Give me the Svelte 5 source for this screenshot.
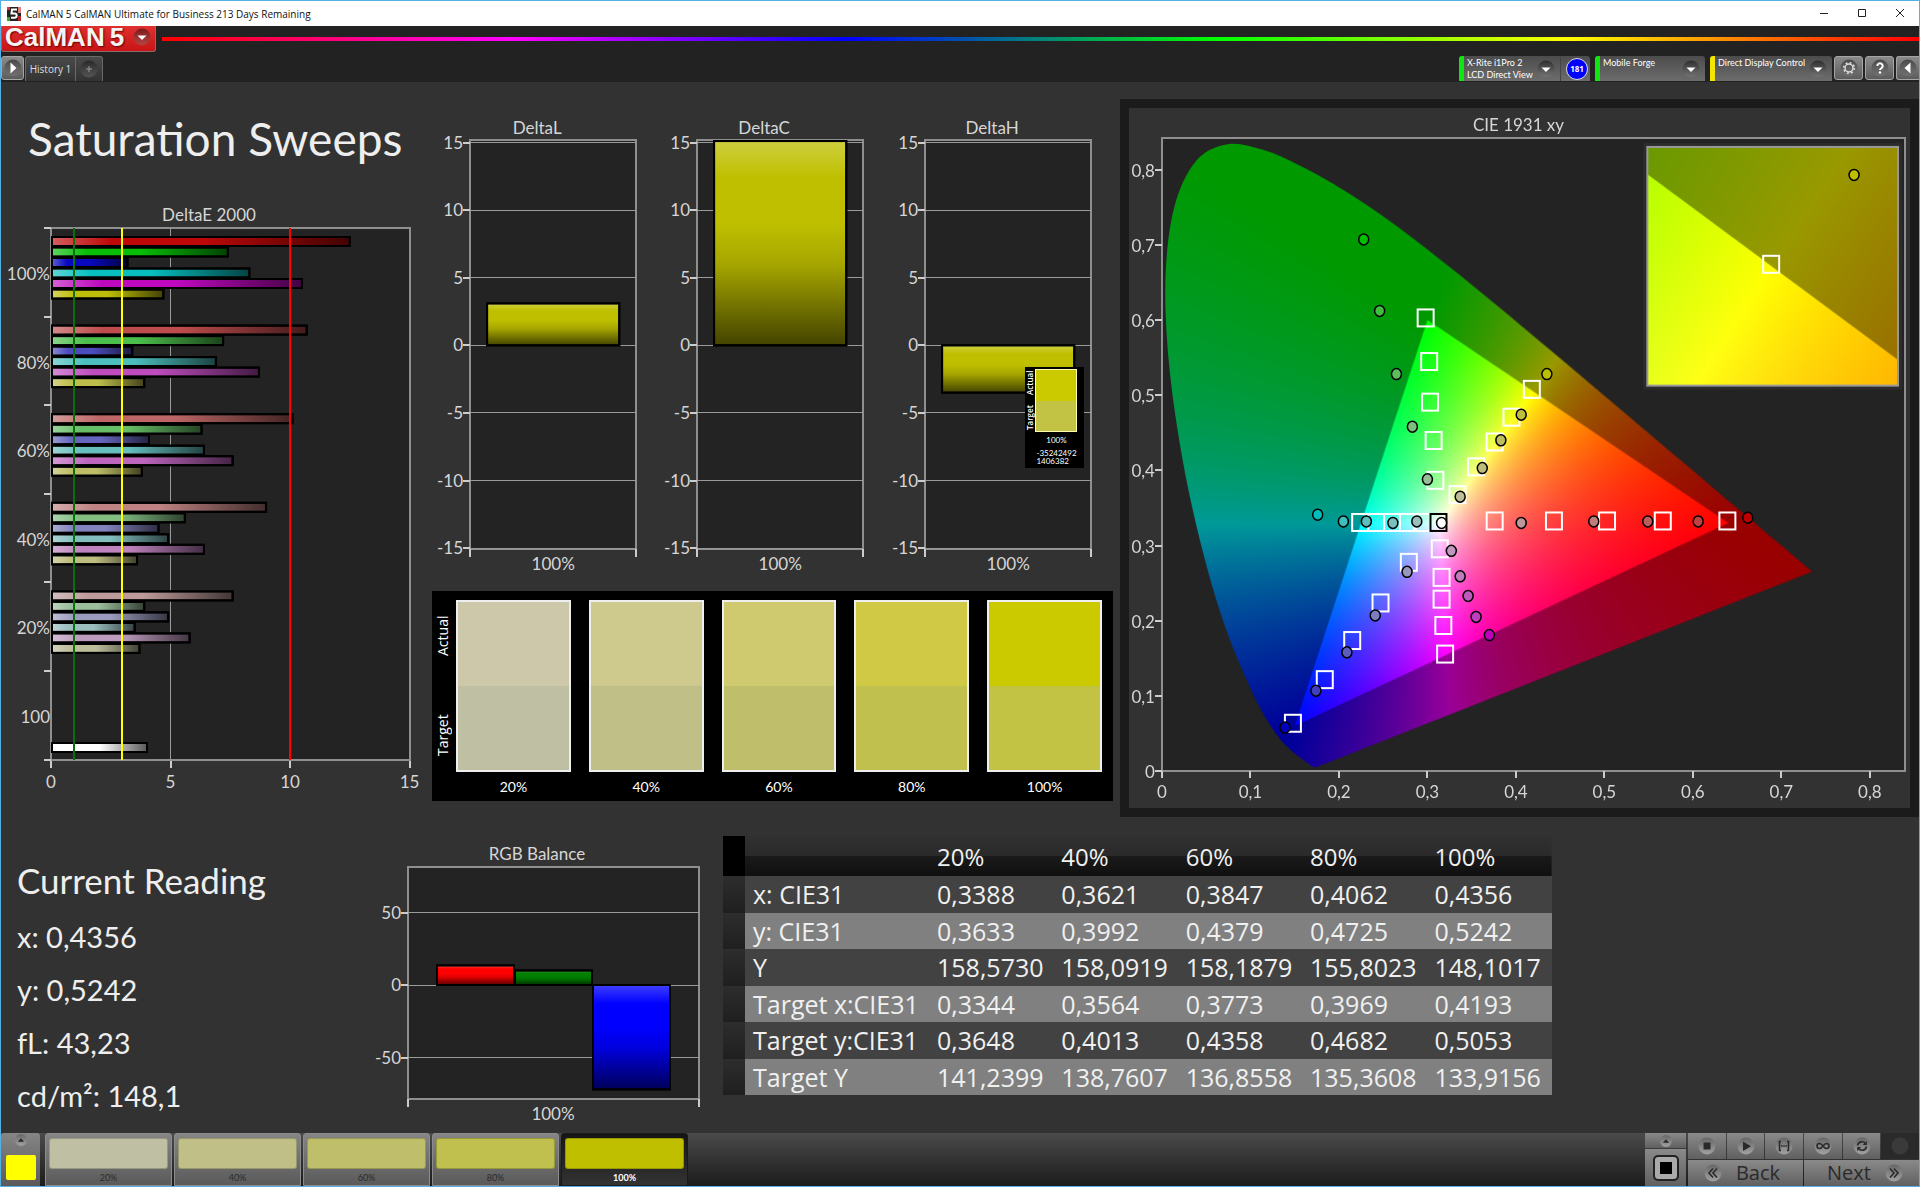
<script lang="ts">
  import { onMount } from 'svelte';

  type XY = [number, number];

  interface Reading {
    level: string;
    actual: string;
    target: string;
  }

  const readings: Reading[] = [
    { level: '20%', actual: '#cdc8aa', target: '#bebfa3' },
    { level: '40%', actual: '#cec98d', target: '#bfbf87' },
    { level: '60%', actual: '#cfca6f', target: '#bfbf6b' },
    { level: '80%', actual: '#cfc945', target: '#bfc04d' },
    { level: '100%', actual: '#cbca00', target: '#c2c244' },
  ];

  const patches = ['#bebfa3', '#bfbf87', '#bfbf6b', '#bfc04d', '#bfbf00'];
  let selected = $state(4);

  const devices = [
    { lines: ['X-Rite i1Pro 2', 'LCD Direct View'], status: '#0fe60f', badge: '181', width: 131 },
    { lines: ['Mobile Forge'], status: '#0fe60f', width: 110 },
    { lines: ['Direct Display Control'], status: '#f2e600', width: 122 },
  ];

  const table = [
    { name: 'x: CIE31', values: ['0,3388', '0,3621', '0,3847', '0,4062', '0,4356'] },
    { name: 'y: CIE31', values: ['0,3633', '0,3992', '0,4379', '0,4725', '0,5242'] },
    { name: 'Y', values: ['158,5730', '158,0919', '158,1879', '155,8023', '148,1017'] },
    { name: 'Target x:CIE31', values: ['0,3344', '0,3564', '0,3773', '0,3969', '0,4193'] },
    { name: 'Target y:CIE31', values: ['0,3648', '0,4013', '0,4358', '0,4682', '0,5053'] },
    { name: 'Target Y', values: ['141,2399', '138,7607', '136,8558', '135,3608', '133,9156'] },
  ];

  // DeltaE 2000: one group per saturation level, bars in R G B C M Y order
  const deltaE = [
    { label: '100%', tint: 8, values: [12.5, 7.4, 3.2, 8.3, 10.5, 4.7] },
    { label: '80%', tint: 76, values: [10.7, 7.2, 3.4, 6.9, 8.7, 3.9] },
    { label: '60%', tint: 102, values: [10.1, 6.3, 4.1, 6.4, 7.6, 3.8] },
    { label: '40%', tint: 130, values: [9, 5.6, 4.5, 4.9, 6.4, 3.6] },
    { label: '20%', tint: 155, values: [7.6, 3.9, 4.9, 3.5, 5.8, 3.7] },
    { label: '100', tint: 0, values: [] },
  ];
  const channels = ['100', '010', '001', '011', '101', '110'];

  function barColor(channel: string, tint: number) {
    const parts = [...channel].map((on) => (on === '1' ? 190 : tint));
    return `rgb(${parts.join(',')})`;
  }

  const dex = (v: number) => 50 + v * 23.9;
  const groupY = (i: number) => 28 + i * 88.6;

  const deltas = [
    { title: 'DeltaL', value: 3.1 },
    { title: 'DeltaC', value: 15.2 },
    { title: 'DeltaH', value: -3.5 },
  ];
  const deltaTicks = [15, 10, 5, 0, -5, -10, -15];
  const dy = (v: number) => 235 - v * 13.5;

  const balance = [
    { color: '#ff0000', value: 13.5 },
    { color: '#008000', value: 10 },
    { color: '#0000ff', value: -72 },
  ];
  const by = (v: number) => 151 - v * 1.45;

  // CIE diagram
  const CIE_W = 782;
  const CIE_H = 701;
  const plot = { x0: 33, x1: 777, y0: 30, y1: 664 };
  const inset = { x0: 519, x1: 770, y0: 39, y1: 278 };
  const px = (x: number) => plot.x0 + x * 886;
  const py = (y: number) => plot.y1 - y * 753;

  const locus: XY[] = [
    [0.1741, 0.005], [0.1714, 0.0051], [0.1689, 0.0069], [0.1644, 0.0109], [0.1566, 0.0177],
    [0.151, 0.0227], [0.144, 0.0297], [0.1355, 0.0399], [0.1241, 0.0578], [0.1096, 0.0868],
    [0.0913, 0.1327], [0.0687, 0.2007], [0.0454, 0.295], [0.0235, 0.4127], [0.0082, 0.5384],
    [0.0039, 0.6548], [0.0139, 0.7502], [0.0389, 0.812], [0.0743, 0.8338], [0.1142, 0.8262],
    [0.1547, 0.8059], [0.1929, 0.7816], [0.2296, 0.7543], [0.2658, 0.7243], [0.3016, 0.6923],
    [0.3373, 0.6589], [0.3731, 0.6245], [0.4087, 0.5896], [0.4441, 0.5547], [0.4788, 0.5202],
    [0.5125, 0.4866], [0.5448, 0.4544], [0.5752, 0.4242], [0.627, 0.3725], [0.6658, 0.334],
    [0.6915, 0.3083], [0.719, 0.2809], [0.7347, 0.2653],
  ];
  const gamut: XY[] = [[0.64, 0.33], [0.3, 0.6], [0.15, 0.06]];

  const targets: XY[] = [
    [0.298, 0.602], [0.302, 0.544], [0.303, 0.49], [0.307, 0.439], [0.309, 0.386],
    [0.418, 0.507], [0.395, 0.47], [0.376, 0.437], [0.355, 0.404], [0.334, 0.367],
    [0.376, 0.332], [0.443, 0.332], [0.503, 0.332], [0.566, 0.332], [0.639, 0.332],
    [0.224, 0.33], [0.242, 0.33], [0.26, 0.33], [0.278, 0.33], [0.294, 0.33],
    [0.314, 0.295], [0.316, 0.257], [0.316, 0.228], [0.318, 0.193], [0.32, 0.155],
    [0.279, 0.277], [0.247, 0.223], [0.215, 0.173], [0.184, 0.121], [0.148, 0.063],
  ];

  const measured = [
    { channel: '010', points: [[0.228, 0.707], [0.246, 0.612], [0.265, 0.528], [0.283, 0.458], [0.3, 0.388]] },
    { channel: '110', points: [[0.435, 0.528], [0.406, 0.474], [0.383, 0.44], [0.362, 0.403], [0.337, 0.365]] },
    { channel: '100', points: [[0.662, 0.337], [0.606, 0.332], [0.549, 0.332], [0.488, 0.332], [0.406, 0.33]] },
    { channel: '011', points: [[0.176, 0.341], [0.205, 0.332], [0.231, 0.332], [0.261, 0.33], [0.288, 0.332]] },
    { channel: '101', points: [[0.37, 0.181], [0.355, 0.205], [0.346, 0.233], [0.337, 0.259], [0.327, 0.293]] },
    { channel: '001', points: [[0.139, 0.058], [0.174, 0.107], [0.209, 0.158], [0.241, 0.207], [0.277, 0.265]] },
  ];
  const tints = [0, 64, 92, 124, 152];

  let canvas: HTMLCanvasElement;

  function shade(x: number, y: number, gain: number) {
    const X = x / y;
    const Z = (1 - x - y) / y;
    const r = Math.max(0, 3.2406 * X - 1.5372 - 0.4986 * Z);
    const g = Math.max(0, -0.9689 * X + 1.8758 + 0.0415 * Z);
    const b = Math.max(0, 0.0557 * X - 0.204 + 1.057 * Z);
    const k = (255 * gain) / Math.max(r, g, b, 1e-6);
    return [r * k, g * k, b * k];
  }

  /** Chromaticity fill, sampled per pixel through the given pixel-to-xy mapping. */
  function layer(w: number, h: number, toXY: (i: number, j: number) => XY, gain: number) {
    const c = document.createElement('canvas');
    c.width = w;
    c.height = h;
    const ctx = c.getContext('2d')!;
    const img = ctx.createImageData(w, h);
    for (let j = 0; j < h; j++) {
      for (let i = 0; i < w; i++) {
        const [x, y] = toXY(i, j);
        const o = (j * w + i) * 4;
        const [r, g, b] = shade(x, Math.max(y, 0.001), gain);
        img.data[o] = r;
        img.data[o + 1] = g;
        img.data[o + 2] = b;
        img.data[o + 3] = 255;
      }
    }
    ctx.putImageData(img, 0, 0);
    return c;
  }

  function polygon(points: XY[]) {
    const path = new Path2D();
    points.forEach(([x, y], i) => (i ? path.lineTo(x, y) : path.moveTo(x, y)));
    path.closePath();
    return path;
  }

  function smooth(points: XY[]) {
    const path = new Path2D();
    path.moveTo(...points[0]);
    for (let i = 0; i < points.length - 1; i++) {
      const p0 = points[Math.max(i - 1, 0)];
      const p1 = points[i];
      const p2 = points[i + 1];
      const p3 = points[Math.min(i + 2, points.length - 1)];
      path.bezierCurveTo(
        p1[0] + (p2[0] - p0[0]) / 6, p1[1] + (p2[1] - p0[1]) / 6,
        p2[0] - (p3[0] - p1[0]) / 6, p2[1] - (p3[1] - p1[1]) / 6,
        p2[0], p2[1],
      );
    }
    path.closePath();
    return path;
  }

  function clipped(ctx: CanvasRenderingContext2D, path: Path2D, image: HTMLCanvasElement, x = 0, y = 0) {
    ctx.save();
    ctx.clip(path);
    ctx.drawImage(image, x, y);
    ctx.restore();
  }

  onMount(() => {
    const ctx = canvas.getContext('2d')!;
    ctx.fillStyle = '#232323';
    ctx.fillRect(plot.x0, plot.y0, plot.x1 - plot.x0, plot.y1 - plot.y0);

    const toXY = (i: number, j: number): XY => [(i - plot.x0) / 886, (plot.y1 - j) / 753];
    const place = ([x, y]: XY): XY => [px(x), py(y)];
    clipped(ctx, smooth(locus.map(place)), layer(CIE_W, CIE_H, toXY, 0.6));
    clipped(ctx, polygon(gamut.map(place)), layer(CIE_W, CIE_H, toXY, 1));

    // magnified view round the selected target
    const w = inset.x1 - inset.x0;
    const h = inset.y1 - inset.y0;
    const zoomXY = (i: number, j: number): XY => [0.4193 + (i - 124) / 5100, 0.5053 - (j - 119) / 4760];
    const zoomPlace = ([x, y]: XY): XY => [
      inset.x0 + 124 + (x - 0.4193) * 5100,
      inset.y0 + 119 - (y - 0.5053) * 4760,
    ];
    ctx.fillStyle = '#2c2c2c';
    ctx.fillRect(inset.x0 - 4, inset.y0 - 4, w + 8, h + 8);
    ctx.drawImage(layer(w, h, zoomXY, 0.6), inset.x0, inset.y0);
    ctx.save();
    ctx.beginPath();
    ctx.rect(inset.x0, inset.y0, w, h);
    ctx.clip();
    clipped(ctx, polygon(gamut.map(zoomPlace)), layer(w, h, zoomXY, 1), inset.x0, inset.y0);
    ctx.restore();
  });
</script>

{#snippet knob(kind: string)}
  <svg class="knob" viewBox="0 0 20 20" aria-hidden="true">
    <circle cx="10" cy="10" r="8.5" fill="url(#knob-fill)" />
    {#if kind === 'down'}
      <path d="M5.5 8.5h9L10 13z" fill="#fff" />
    {:else if kind === 'right'}
      <path d="M7.5 4.500v11l6-5.500z" fill="#fff" />
    {:else if kind === 'left'}
      <path d="M12.500 4.500v11l-6-5.500z" fill="#fff" />
    {:else if kind === 'plus'}
      <path d="M10 7v6M7 10h6" stroke="#999" fill="none" />
    {:else if kind === 'gear'}
      <circle cx="10" cy="10" r="4" fill="none" stroke="#ddd" stroke-width="1.400" />
      <circle cx="10" cy="10" r="5.300" fill="none" stroke="#ddd" stroke-width="1.600" stroke-dasharray="1.900 2.260" />
    {:else if kind === 'help'}
      <path d="M7.300 8a2.700 2.600 0 1 1 4.200 2.100c-1 .7-1.500 1-1.500 2" stroke="#fff" stroke-width="2" fill="none" />
      <circle cx="10" cy="14.500" r="1.200" fill="#fff" />
    {/if}
  </svg>
{/snippet}

{#snippet icon(kind: string)}
  <svg class="knob" viewBox="0 0 20 20" aria-hidden="true">
    <circle cx="10" cy="10" r="8.500" fill={kind === 'blank' ? '#3a3a3a' : 'url(#icon-fill)'} />
    <g fill="none" stroke="#2a2a2a" stroke-width="1.600">
      {#if kind === 'stop'}
        <path d="M6.500 6.500h7v7h-7z" fill="#2a2a2a" stroke="none" />
      {:else if kind === 'play'}
        <path d="M7 5.500v9.500l8-4.800z" fill="#2a2a2a" stroke="none" />
      {:else if kind === 'range'}
        <path d="M7 5.500H5.500v9H7M13 5.500h1.500v9H13" />
        <path d="M7 10h6" stroke-dasharray="1.500 .8" />
      {:else if kind === 'loop'}
        <path d="M10 10c-1.500-2-2.500-2.500-3.500-2.500a2.500 2.500 0 0 0 0 5c1 0 2-.5 3.500-2.500s2.500-2.500 3.500-2.500a2.500 2.500 0 0 1 0 5c-1 0-2-.5-3.500-2.500z" />
      {:else if kind === 'refresh'}
        <path d="M5.500 9.500a4.500 4.500 0 0 1 8-2M14.500 10.500a4.500 4.500 0 0 1-8 2" />
        <path d="M14.800 5v4h-4zM5.200 15v-4h4z" fill="#2a2a2a" stroke="none" />
      {:else if kind === 'back'}
        <path d="M10 5.500L6 10l4 4.500M14 5.500L10 10l4 4.500" />
      {:else if kind === 'next'}
        <path d="M6 5.500L10 10l-4 4.500M10 5.500L14 10l-4 4.500" />
      {:else if kind === 'up'}
        <path d="M5.500 12.500h9L10 7.500z" fill="#2a2a2a" stroke="none" />
      {/if}
    </g>
  </svg>
{/snippet}

<svg class="defs" width="0" height="0" aria-hidden="true">
  <defs>
    <linearGradient id="bar-h">
      <stop offset="0" stop-color="#fff" stop-opacity=".35" />
      <stop offset=".2" stop-color="#fff" stop-opacity="0" />
      <stop offset=".5" stop-color="#000" stop-opacity="0" />
      <stop offset="1" stop-color="#000" stop-opacity=".65" />
    </linearGradient>
    <linearGradient id="bar-v" x2="0" y2="1">
      <stop offset="0" stop-color="#fff" stop-opacity=".25" />
      <stop offset=".18" stop-color="#fff" stop-opacity="0" />
      <stop offset=".4" stop-color="#000" stop-opacity="0" />
      <stop offset=".6" stop-color="#000" stop-opacity=".13" />
      <stop offset="1" stop-color="#000" stop-opacity=".65" />
    </linearGradient>
    <linearGradient id="knob-fill" x2="0" y2="1">
      <stop offset="0" stop-color="#000" stop-opacity=".45" />
      <stop offset="1" stop-color="#888" stop-opacity=".35" />
    </linearGradient>
    <linearGradient id="icon-fill" x2="0" y2="1">
      <stop offset="0" stop-color="#666" />
      <stop offset="1" stop-color="#a2a2a2" />
    </linearGradient>
  </defs>
</svg>

<div class="window">
  <header class="titlebar">
    <svg class="app-icon" viewBox="0 0 14 14" aria-hidden="true">
      <rect width="14" height="14" fill="#222" />
      <path d="M0 0h3v3H0z" fill="#d33" />
      <path d="M11 0h3v6h-3z" fill="#e08080" />
      <path d="M0 10h3v4H0z" fill="#3a3" />
      <path d="M11 9h3v5h-3z" fill="#b22" />
      <path d="M10 2.500H5l-.5 4h3.300c2.700 0 2.400 4.200-.3 4.200H4" fill="none" stroke="#fff" stroke-width="2" />
    </svg>
    <span class="title">CalMAN 5 CalMAN Ultimate for Business 213 Days Remaining</span>
    <div class="window-controls">
      <button type="button" aria-label="Minimize">
        <svg viewBox="0 0 10 10"><path d="M1 5.500h8" /></svg>
      </button>
      <button type="button" aria-label="Maximize">
        <svg viewBox="0 0 10 10"><path d="M1.500 1.500h7v7h-7z" /></svg>
      </button>
      <button type="button" aria-label="Close">
        <svg viewBox="0 0 10 10"><path d="M1 1l8 8M9 1L1 9" /></svg>
      </button>
    </div>
  </header>

  <div class="brand-row">
    <button type="button" class="brand">
      <span class="brand-name">CalMAN</span>
      <span class="brand-name">5</span>
      {@render knob('down')}
    </button>
    <div class="spectrum"></div>
  </div>

  <div class="tab-row">
    <button type="button" class="square-btn" aria-label="Expand">{@render knob('right')}</button>
    <nav class="tabs">
      <button type="button" class="tab">History 1</button>
      <button type="button" class="tab-add" aria-label="Add tab">{@render knob('plus')}</button>
    </nav>
    <div class="devices">
      {#each devices as device (device.lines[0])}
        <div class="device" style="width: {device.width}px">
          <span class="status" style="background-color: {device.status}"></span>
          <button type="button" class="device-btn" aria-haspopup="true">
            <span class="device-name">
              {#each device.lines as line (line)}<span>{line}</span>{/each}
            </span>
            {@render knob('down')}
          </button>
          {#if device.badge}
            <span class="badge-cell"><span class="badge">{device.badge}</span></span>
          {/if}
        </div>
      {/each}
    </div>
    <div class="tools">
      <button type="button" class="square-btn" aria-label="Settings">{@render knob('gear')}</button>
      <button type="button" class="square-btn" aria-label="Help">{@render knob('help')}</button>
      <button type="button" class="square-btn last" aria-label="Collapse">{@render knob('left')}</button>
    </div>
  </div>

  <main>
    <section class="top">
      <div class="sweeps">
        <h1>Saturation Sweeps</h1>
        <svg class="chart" viewBox="0 0 430 600" role="img" aria-label="DeltaE 2000">
          <text x="208" y="21" text-anchor="middle">DeltaE 2000</text>
          <rect class="plot" x="50" y="28" width="359" height="532" />
          {#each [5, 10] as t (t)}
            <line class="grid" x1={dex(t)} x2={dex(t)} y1="28" y2="560" />
          {/each}
          {#each deltaE as group, g (group.label)}
            <line class="tick" x1="43" x2="50" y1={groupY(g)} y2={groupY(g)} />
            <text x="49" y={groupY(g) + 52} text-anchor="end">{group.label}</text>
            {#each group.values as v, i (i)}
              {@const y = groupY(g) + 9 + i * 10.5}
              <rect class="bar" x="51" {y} width={dex(v) - 51} height="9" fill={barColor(channels[i], group.tint)} />
              <rect class="bar" x="51" {y} width={dex(v) - 51} height="9" fill="url(#bar-h)" />
            {/each}
          {/each}
          <line class="tick" x1="43" x2="50" y1="560" y2="560" />
          <rect class="bar" x="51" y="543" width="95" height="9" fill="#fff" />
          <rect class="bar" x="51" y="543" width="95" height="9" fill="url(#bar-h)" />
          <line x1="73" x2="73" y1="28" y2="560" stroke="#0a6e0a" stroke-width="2" />
          <line x1="121" x2="121" y1="28" y2="560" stroke="#ffff00" stroke-width="2" />
          <line x1="289" x2="289" y1="28" y2="560" stroke="#f00" stroke-width="2" />
          {#each [0, 5, 10, 15] as t (t)}
            <line class="tick" x1={dex(t)} x2={dex(t)} y1="561" y2="568" />
            <text x={dex(t)} y="588" text-anchor="middle">{t}</text>
          {/each}
        </svg>
      </div>

      <div class="middle">
        <div class="deltas">
          {#each deltas as delta, i (delta.title)}
            {@const top = Math.max(dy(Math.max(delta.value, 0)), 31)}
            <div class="delta">
              <svg class="chart" viewBox="0 0 227 470" role="img" aria-label={delta.title}>
                <text x="106" y="24" text-anchor="middle">{delta.title}</text>
                <rect class="plot" x="39" y="30" width="166" height="408" />
                {#each deltaTicks as t (t)}
                  <line class="grid" x1="39" x2="205" y1={dy(t)} y2={dy(t)} />
                  <line class="tick" x1="32" x2="39" y1={dy(t)} y2={dy(t)} />
                  <text x="32" y={dy(t) + 6} text-anchor="end">{t}</text>
                {/each}
                <rect class="bar" x="56" y={top} width="132" height={dy(Math.min(delta.value, 0)) - top} fill="#bfbf00" />
                <rect class="bar" x="56" y={top} width="132" height={dy(Math.min(delta.value, 0)) - top} fill="url(#bar-v)" />
                <line class="tick" x1="39" x2="39" y1="438" y2="446" />
                <line class="tick" x1="205" x2="205" y1="438" y2="446" />
                <text x="122" y="459" text-anchor="middle">100%</text>
              </svg>
              {#if i === 2}
                <div class="tooltip" role="tooltip">
                  <div class="tip-side"><span>Target</span><span>Actual</span></div>
                  <div class="tip-body">
                    <div class="tip-swatch"></div>
                    <span class="tip-level">100%</span>
                    <span class="tip-value">-35242492<br />1406382</span>
                  </div>
                </div>
              {/if}
            </div>
          {/each}
        </div>

        <div class="swatches">
          <div class="side"><span>Target</span><span>Actual</span></div>
          {#each readings as reading (reading.level)}
            <figure class="swatch">
              <div class="pair">
                <div style="background-color: {reading.actual}"></div>
                <div style="background-color: {reading.target}"></div>
              </div>
              <figcaption>{reading.level}</figcaption>
            </figure>
          {/each}
        </div>
      </div>

      <div class="cie">
        <canvas bind:this={canvas} width={CIE_W} height={CIE_H}></canvas>
        <svg class="chart" viewBox="0 0 {CIE_W} {CIE_H}" role="img" aria-label="CIE 1931 xy">
          <text x="390" y="23" text-anchor="middle">CIE 1931 xy</text>
          <rect class="frame" x={plot.x0} y={plot.y0} width={plot.x1 - plot.x0} height={plot.y1 - plot.y0} />
          {#each [0, 1, 2, 3, 4, 5, 6, 7, 8] as t (t)}
            {@const label = t ? `0,${t}` : '0'}
            <line class="tick" x1={px(t / 10)} x2={px(t / 10)} y1="664" y2="671" />
            <text x={px(t / 10)} y="691" text-anchor="middle">{label}</text>
            <line class="tick" x1="26" x2="33" y1={py(t / 10)} y2={py(t / 10)} />
            <text x="26" y={py(t / 10) + 7} text-anchor="end">{label}</text>
          {/each}
          {#each targets as [x, y], i (i)}
            <rect class="target" x={px(x) - 8} y={py(y) - 9} width="16" height="17" />
          {/each}
          <rect class="target white-point" x={px(0.3125) - 8} y={py(0.33) - 9} width="16" height="17" />
          {#each measured as series (series.channel)}
            {#each series.points as [x, y], i (i)}
              <ellipse class="measured" cx={px(x)} cy={py(y)} rx="5" ry="5.500" fill={barColor(series.channel, tints[i])} />
            {/each}
          {/each}
          <ellipse class="measured" cx={px(0.316)} cy={py(0.33)} rx="5" ry="5.500" fill="#fff" />
          <rect class="inset" x={inset.x0} y={inset.y0} width={inset.x1 - inset.x0} height={inset.y1 - inset.y0} />
          <rect class="target" x="635" y="148" width="16" height="17" />
          <ellipse class="measured" cx="726" cy="67" rx="5" ry="5.500" fill="#bfbf00" />
        </svg>
      </div>
    </section>

    <section class="bottom">
      <div class="current">
        <h2>Current Reading</h2>
        <p>x: 0,4356</p>
        <p>y: 0,5242</p>
        <p>fL: 43,23</p>
        <p>cd/m²: 148,1</p>
      </div>

      <svg class="chart" viewBox="0 0 357 298" role="img" aria-label="RGB Balance">
        <text x="171" y="26" text-anchor="middle">RGB Balance</text>
        <rect class="plot" x="42" y="33" width="291" height="232" />
        {#each [50, 0, -50] as t (t)}
          <line class="grid" x1="42" x2="333" y1={by(t)} y2={by(t)} />
          <line class="tick" x1="35" x2="42" y1={by(t)} y2={by(t)} />
          <text x="35" y={by(t) + 6} text-anchor="end">{t}</text>
        {/each}
        {#each balance as bar, i (bar.color)}
          {@const h = Math.abs(bar.value) * 1.45}
          <rect class="bar" x={71 + i * 78} y={by(Math.max(bar.value, 0))} width="77" height={h} fill={bar.color} />
          <rect class="bar" x={71 + i * 78} y={by(Math.max(bar.value, 0))} width="77" height={h} fill="url(#bar-v)" />
        {/each}
        <line class="tick" x1="42" x2="42" y1="265" y2="273" />
        <line class="tick" x1="333" x2="333" y1="265" y2="273" />
        <text x="187" y="286" text-anchor="middle">100%</text>
      </svg>

      <table>
        <thead>
          <tr>
            <th class="handle"></th>
            <th class="name"></th>
            {#each readings as reading (reading.level)}<th scope="col" class="level">{reading.level}</th>{/each}
          </tr>
        </thead>
        <tbody>
          {#each table as row (row.name)}
            <tr>
              <td class="handle"></td>
              <th scope="row">{row.name}</th>
              {#each row.values as value, i (i)}<td>{value}</td>{/each}
            </tr>
          {/each}
        </tbody>
      </table>
    </section>
  </main>

  <footer>
    <div class="current-patch">
      <button type="button" aria-label="Patch options">{@render icon('up')}</button>
      <span class="patch-color"></span>
    </div>
    <div class="patches">
      {#each patches as color, i (color)}
        <button type="button" class="patch" class:selected={selected === i} onclick={() => (selected = i)}>
          <span class="patch-fill" style="background-color: {color}"></span>
          {readings[i].level}
        </button>
      {/each}
    </div>
    <div class="meter">
      <button type="button" aria-label="Meter options">{@render icon('up')}</button>
      <button type="button" class="meter-window" aria-label="Pattern window"><span></span></button>
    </div>
    <div class="transport">
      <div class="transport-row">
        <button type="button" aria-label="Stop">{@render icon('stop')}</button>
        <button type="button" aria-label="Play">{@render icon('play')}</button>
        <button type="button" aria-label="Read series">{@render icon('range')}</button>
        <button type="button" aria-label="Continuous">{@render icon('loop')}</button>
        <button type="button" aria-label="Refresh">{@render icon('refresh')}</button>
        <button type="button" class="blank" aria-label="Busy" disabled>{@render icon('blank')}</button>
      </div>
      <div class="transport-row">
        <button type="button" class="step back">{@render icon('back')}<span>Back</span></button>
        <button type="button" class="step next"><span>Next</span>{@render icon('next')}</button>
      </div>
    </div>
  </footer>
</div>

<style>
  :global(body) {
    margin: 0;
    background-color: #323232;
  }

  .window {
    display: flex;
    flex-direction: column;
    box-sizing: border-box;
    min-height: 100vh;
    border: 1px solid #55b0e6;
    background-color: #323232;
    color: #eee;
    font-family: Lato, 'Liberation Sans', sans-serif;
  }

  button {
    padding: 0;
    border: none;
    background: none;
    color: inherit;
    font: inherit;
    cursor: pointer;
  }

  .defs {
    position: absolute;
  }

  /* Title bar */
  .titlebar {
    display: flex;
    align-items: center;
    gap: 5px;
    height: 25px;
    padding-left: 6px;
    background-color: #fff;
    color: #111;
    font: 10px 'Open Sans', sans-serif;
  }

  .app-icon {
    width: 14px;
    height: 14px;
  }

  .window-controls {
    display: flex;
    margin-left: auto;
  }

  .window-controls button {
    width: 38px;
    height: 25px;
  }

  .window-controls svg {
    width: 10px;
    height: 10px;
    fill: none;
    stroke: #222;
  }

  /* Brand and tabs */
  .brand-row,
  .tab-row {
    display: flex;
    background-color: #222;
  }

  .brand-row {
    align-items: flex-start;
    gap: 6px;
    height: 30px;
  }

  .brand {
    display: flex;
    align-items: center;
    gap: 5px;
    box-sizing: border-box;
    width: 155px;
    height: 26px;
    padding: 0 0 4px 3px;
    overflow: hidden;
    border: 1px solid #8d6a6a;
    border-top: none;
    border-radius: 0 0 3px 3px;
    background: linear-gradient(#e03030, #c81414);
  }

  .brand-name {
    color: #f4f4f4;
    font: bold 26px/20px 'Liberation Sans', sans-serif;
    text-shadow: 1px 1px 2px #6b0000;
  }

  .brand .knob {
    margin-left: 3px;
  }

  .spectrum {
    flex: 1;
    height: 4px;
    margin-top: 11px;
    background: linear-gradient(
      to right,
      #f00, #f0f 20%, #00f 39%, #0f0 60%, #ff0 80%, #f00
    );
  }

  .knob {
    display: block;
    flex: none;
    width: 20px;
    height: 20px;
  }

  .tab-row {
    height: 26px;
    font-size: 10px;
  }

  .square-btn {
    display: flex;
    align-items: center;
    justify-content: center;
    box-sizing: border-box;
    width: 29px;
    height: 24px;
    border: 1px solid #a5a5a5;
    border-radius: 3px;
    background: linear-gradient(#8a8a8a, #5c5c5c);
  }

  .tab-row > .square-btn,
  .square-btn.last {
    width: 23px;
  }

  .square-btn.last {
    border-right: none;
    border-radius: 3px 0 0 3px;
  }

  .tabs {
    display: flex;
    box-sizing: border-box;
    height: 25px;
    margin-left: 1px;
    border: 1px solid #6a6a6a;
    border-bottom: none;
    border-radius: 3px 3px 0 0;
    background: linear-gradient(#4a4a4a, #333);
  }

  .tab {
    width: 49px;
    color: #ddd;
    font-family: 'Open Sans', sans-serif;
  }

  .tab-add {
    display: flex;
    align-items: center;
    justify-content: center;
    width: 27px;
    border-left: 1px solid #6a6a6a;
  }

  .devices {
    display: flex;
    gap: 5px;
    height: 25px;
    margin-left: auto;
    font-size: 9px;
  }

  .device {
    display: flex;
    overflow: hidden;
    border-radius: 3px 3px 0 0;
    background: linear-gradient(#4c4c4c, #6c6c6c);
  }

  .status {
    flex: none;
    width: 5px;
  }

  .device-btn {
    display: flex;
    flex: 1;
    align-items: center;
    justify-content: space-between;
    padding: 0 4px 0 3px;
    text-align: left;
  }

  .device-name {
    display: flex;
    flex-direction: column;
    align-self: flex-start;
    padding-top: 1px;
    line-height: 12px;
    color: #fff;
    white-space: nowrap;
  }

  .badge-cell {
    display: flex;
    align-items: center;
    padding: 0 2px 0 5px;
    border-left: 1px solid #444;
  }

  .badge {
    box-sizing: border-box;
    width: 22px;
    height: 22px;
    border: 1px solid #ddd;
    border-radius: 50%;
    background-color: #00f;
    color: #fff;
    font: bold 8px/20px 'Open Sans', sans-serif;
    text-align: center;
  }

  .tools {
    display: flex;
    gap: 2px;
    margin-left: 2px;
  }

  /* Charts */
  .chart {
    display: block;
    width: 100%;
    height: auto;
    font-size: 17px;
    fill: #d6d6d6;
  }

  .plot,
  .frame {
    fill: #232323;
    stroke: #8f8f8f;
    stroke-width: 2;
    shape-rendering: crispEdges;
  }

  .frame {
    fill: none;
  }

  .grid,
  .tick {
    stroke: #9a9a9a;
    stroke-width: 1;
    shape-rendering: crispEdges;
  }

  .tick {
    stroke: #ccc;
    stroke-width: 2;
  }

  .bar {
    stroke: #000;
    stroke-width: 2;
  }

  .target {
    fill: none;
    stroke: #fff;
    stroke-width: 2;
  }

  .white-point {
    stroke: #000;
  }

  .measured {
    stroke: #000;
    stroke-width: 1.5;
  }

  .inset {
    fill: none;
    stroke: #999;
    stroke-width: 2;
  }

  .top {
    display: grid;
    grid-template-columns: minmax(0, 430fr) minmax(0, 682fr) minmax(0, 806fr);
    align-items: start;
  }

  h1 {
    margin: 0;
    padding: 22px 0 26px 27px;
    font-size: 46px;
    font-weight: 400;
    line-height: 70px;
    white-space: nowrap;
  }

  .middle {
    padding-top: 28px;
  }

  .deltas {
    display: grid;
    grid-template-columns: repeat(3, 1fr);
  }

  .delta {
    position: relative;
  }

  .tooltip {
    position: absolute;
    top: 257px;
    right: 29px;
    display: flex;
    box-sizing: border-box;
    width: 59px;
    height: 101px;
    padding-top: 2px;
    background-color: #000;
    color: #fff;
    font-size: 8px;
    line-height: 8px;
  }

  .side,
  .tip-side {
    display: flex;
    justify-content: space-between;
    box-sizing: border-box;
    writing-mode: vertical-rl;
    transform: rotate(180deg);
    font-family: 'Open Sans', sans-serif;
  }

  .tip-side {
    height: 63px;
    width: 10px;
    padding: 2px 0;
    line-height: 10px;
    font-weight: 600;
  }

  .tip-body {
    display: flex;
    flex-direction: column;
    align-items: center;
    width: 43px;
  }

  .tip-swatch {
    box-sizing: border-box;
    width: 42px;
    height: 63px;
    border: 1px solid #ffffb0;
    background: linear-gradient(#cbca00 50%, #c2c244 50%);
  }

  .tip-level {
    padding: 4px 0 5px;
  }

  .tip-value {
    white-space: nowrap;
  }

  .swatches {
    display: grid;
    grid-template-columns: 5px repeat(5, 1fr);
    gap: 18px;
    margin: 10px 0 0 1px;
    padding: 9px 11px 0 1px;
    background-color: #000;
    color: #fff;
    font-size: 14px;
  }

  .side {
    width: 20px;
    height: 172px;
    padding: 16px 0;
    line-height: 20px;
  }

  .swatch {
    margin: 0;
    text-align: center;
    line-height: 29px;
  }

  .pair {
    display: grid;
    grid-template-rows: 1fr 1fr;
    box-sizing: border-box;
    height: 172px;
    border: 2px solid #eee;
  }

  .cie {
    display: grid;
    margin: 17px 0 0 7px;
    border: 9px solid #1b1b1b;
  }

  .cie > * {
    grid-area: 1 / 1;
    width: 100%;
  }

  /* Lower half */
  .bottom {
    display: grid;
    grid-template-columns: 365fr 357fr 829fr 367fr;
    align-items: start;
    padding-top: 17px;
  }

  .current {
    padding: 16px 0 0 16px;
  }

  h2,
  .current p {
    margin: 0;
    font-weight: 400;
    white-space: nowrap;
  }

  h2 {
    font-size: 35px;
    line-height: 60px;
  }

  .current p {
    font-size: 29px;
    line-height: 53px;
  }

  table {
    width: 100%;
    margin-top: 2px;
    border-collapse: collapse;
    table-layout: fixed;
    font: 25px/35px 'Open Sans', sans-serif;
    color: #f0f0f0;
  }

  th,
  td {
    height: 37px;
    padding: 0;
    font-weight: 400;
    text-align: left;
    white-space: nowrap;
  }

  tr:nth-child(even) td {
    height: 36px;
  }

  tr:nth-child(even) th {
    height: 36px;
  }

  thead tr {
    background: linear-gradient(#303030, #2a2a2a 50%, #1a1a1a 50%, #101010);
  }

  thead th {
    height: 40px;
    font-size: 24px;
  }

  .level {
    width: 15%;
  }

  .level:last-child {
    width: auto;
  }

  thead .handle {
    width: 22px;
    background: #000;
  }

  thead .name {
    width: 192px;
  }

  tbody th {
    padding-left: 8px;
  }

  tbody tr {
    background-color: #424242;
  }

  tbody tr:nth-child(even) {
    background-color: #808080;
  }

  tbody .handle {
    background: linear-gradient(#2d2d2d, #1f1f1f);
  }

  /* Bottom bar */
  footer {
    display: flex;
    gap: 2px;
    height: 53px;
    margin-top: auto;
    background: linear-gradient(#4a4a4a, #1c1c1c);
    color: #2a2a2a;
  }

  .current-patch {
    display: flex;
    flex-direction: column;
    align-items: center;
    gap: 8px;
    width: 39px;
    margin-right: 3px;
    border-radius: 3px 3px 0 0;
    background: linear-gradient(#858585, #5a5a5a);
  }

  .current-patch .knob,
  .meter .knob {
    width: 14px;
    height: 14px;
  }

  .patch-color {
    width: 30px;
    height: 25px;
    border-radius: 2px;
    background-color: #ff0;
  }

  .patches {
    display: flex;
    gap: 2px;
    flex: 1;
  }

  .patch {
    display: flex;
    flex-direction: column;
    align-items: center;
    gap: 3px;
    box-sizing: border-box;
    width: 127px;
    padding: 4px 3px 0;
    border: 1px solid #8c8c8c;
    border-radius: 3px 3px 0 0;
    background: linear-gradient(#858585, #5a5a5a);
    font-size: 9px;
    line-height: 12px;
  }

  .patch-fill {
    flex: none;
    box-sizing: border-box;
    width: 100%;
    height: 31px;
    border: 1px solid #0003;
    border-radius: 3px;
  }

  .patch.selected {
    border-color: #1a1a1a;
    background: linear-gradient(#151515, #333);
    color: #fff;
    font-weight: 700;
  }

  .meter {
    display: flex;
    flex: none;
    flex-direction: column;
    gap: 1px;
    width: 41px;
  }

  .meter button,
  .transport button {
    display: flex;
    align-items: center;
    justify-content: center;
    background: linear-gradient(#8a8a8a, #606060);
  }

  .meter button {
    height: 15px;
  }

  .meter .meter-window {
    height: 37px;
  }

  .meter-window span {
    width: 12px;
    height: 12px;
    border: 5px solid #aaa;
    border-radius: 3px;
    outline: 2px solid #222;
    background-color: #000;
  }

  .transport {
    display: flex;
    flex: none;
    flex-direction: column;
    gap: 1px;
    width: 231px;
  }

  .transport-row {
    display: flex;
    flex: 1;
    gap: 1px;
  }

  .transport-row button {
    flex: 1;
  }

  .transport .blank {
    background: #2a2a2a;
  }

  .transport .step {
    gap: 13px;
    font: 20px/20px 'Open Sans', sans-serif;
  }

  .transport .back {
    padding-right: 8px;
  }

  .transport .next {
    padding-left: 8px;
  }
</style>
